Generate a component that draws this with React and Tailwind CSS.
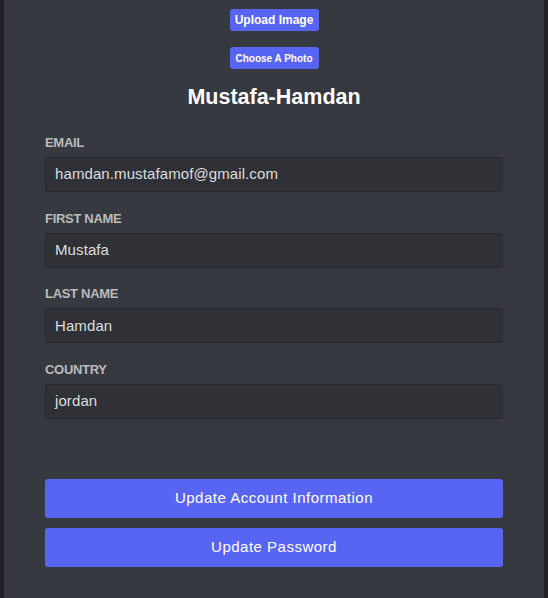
const FIELDS = [
  { label: 'Email', value: 'hamdan.mustafamof@gmail.com' },
  { label: 'First Name', value: 'Mustafa' },
  { label: 'Last Name', value: 'Hamdan' },
  { label: 'Country', value: 'jordan' },
]

export default function App() {
  return (
    <div className="min-h-[598px] bg-[#202225] px-[4px] font-['Liberation_Sans',Arial,sans-serif]">
      <div className="min-h-[598px] bg-[#36393f] px-[41px] pb-[31px] flex flex-col">
        {/* ── Avatar actions ─────────────────────────────── */}
        <div className="flex flex-col items-center">
          <button className="mt-[9px] w-[89px] h-[22px] rounded-[3px] bg-[#5865f2] text-white text-[12px] font-bold">
            Upload Image
          </button>
          <button className="mt-[16px] w-[89px] h-[22px] rounded-[3px] bg-[#5865f2] text-white text-[10px] font-bold">
            Choose A Photo
          </button>
          <h1 className="mt-[16px] text-[21.5px] leading-[24px] font-bold text-white">Mustafa-Hamdan</h1>
        </div>

        {/* ── Account fields ─────────────────────────────── */}
        <div className="mt-[26px] flex flex-col gap-[18.67px]">
          {FIELDS.map((f) => (
            <div key={f.label} className="flex flex-col">
              <label className="text-[13px] leading-[16px] font-bold uppercase text-[#b9bbbe] tracking-[-0.3px]">
                {f.label}
              </label>
              <div className="mt-[6px] h-[35px] rounded-[3px] border border-[#27292d] bg-[#303136] px-[9px] flex items-center text-[15px] tracking-[0.1px] text-[#dcddde]">
                {f.value}
              </div>
            </div>
          ))}
        </div>

        <div className="mt-[60px] flex flex-col gap-[10px]">
          <button className="h-[39px] rounded-[3px] bg-[#5865f2] text-white text-[15px] tracking-[0.5px]">
            Update Account Information
          </button>
          <button className="h-[39px] rounded-[3px] bg-[#5865f2] text-white text-[15px] tracking-[0.5px]">
            Update Password
          </button>
        </div>
      </div>
    </div>
  )
}
